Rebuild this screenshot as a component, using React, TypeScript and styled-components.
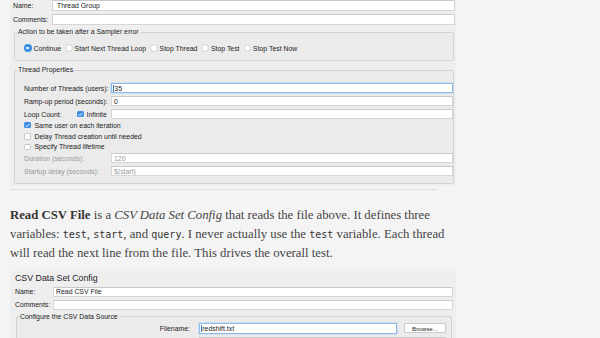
import React, {FC} from "react";
import styled, {createGlobalStyle} from "styled-components";

const GlobalStyle = createGlobalStyle`
  html, body {
    margin: 0;
    padding: 0;
    background: #f4f4f4;
    overflow: hidden;
  }
  #root {
    width: 600px;
    height: 338px;
    overflow: hidden;
  }
`;

const Page = styled.div`
  display: flex;
  flex-direction: column;
  padding-left: 10px;
  width: 446px;
`;

// screenshot of the JMeter panel
const Shot = styled.div<{$top?: number; $left: number; $right: number}>`
  display: flex;
  flex-direction: column;
  background: #eeeeee;
  font-family: "Liberation Sans", Arial, sans-serif;
  font-size: 6.9px;
  color: #222;
  padding: ${p => p.$top || 0}px ${p => p.$right}px 2px ${p => p.$left}px;
`;

const ShotTitle = styled.div`
  font-size: 8.8px;
  line-height: 12px;
  height: 12px;
  color: #1e1e1e;
`;

const FormRow = styled.div<{$label: number; $gap?: number; $h?: number}>`
  display: grid;
  grid-template-columns: ${p => p.$label}px 1fr;
  align-items: center;
  height: ${p => p.$h ?? 10}px;
  margin-top: ${p => p.$gap ?? 3}px;
`;

const Label = styled.span<{$disabled?: boolean; $right?: boolean}>`
  white-space: nowrap;
  color: ${p => (p.$disabled ? "#9a9a9a" : "#222")};
  text-align: ${p => (p.$right ? "right" : "left")};
  padding-right: ${p => (p.$right ? 2 : 0)}px;
`;

const Field = styled.div<{$focus?: boolean; $disabled?: boolean; $indent?: number}>`
  height: 100%;
  box-sizing: border-box;
  background: #fff;
  border: 1px solid ${p => (p.$focus ? "#8fbbe8" : "#d6d6d6")};
  border-top-color: ${p => (p.$focus ? "#8fbbe8" : "#c9c9c9")};
  box-shadow: ${p => (p.$focus ? "0 0 0 0.5px #b9d5f2" : "none")};
  color: ${p => (p.$disabled ? "#999" : "#1a1a1a")};
  padding-left: ${p => p.$indent ?? 2}px;
  display: flex;
  align-items: center;
  white-space: nowrap;
  overflow: hidden;
  position: relative;
`;

const Caret = styled.span`
  width: 0.8px;
  height: 7px;
  background: #3a7bd5;
  margin-right: 0.5px;
`;

const Group = styled.fieldset<{$mt: number; $mx: number}>`
  margin: ${p => p.$mt}px ${p => p.$mx}px 0 ${p => p.$mx}px;
  padding: 0;
  min-width: 0;
  border: 1px solid #d3d3d3;
  border-radius: 2px;
  background: #ebebeb;
`;

const Legend = styled.legend`
  margin-left: 2px;
  padding: 0 1px;
  line-height: 8px;
  font-size: 6.9px;
  color: #222;
`;

const GroupBody = styled.div<{$pt: number; $pb: number; $pl: number; $pr?: number}>`
  display: flex;
  flex-direction: column;
  padding: ${p => p.$pt}px ${p => p.$pr ?? 0}px ${p => p.$pb}px ${p => p.$pl}px;
`;

const RadioRow = styled.div`
  display: flex;
  align-items: center;
  height: 10px;
  gap: 4px;
`;

const RadioItem = styled.label`
  display: flex;
  align-items: center;
  gap: 2px;
  white-space: nowrap;
`;

const RadioDot = styled.span<{$on?: boolean}>`
  width: 7.5px;
  height: 7.5px;
  box-sizing: border-box;
  border-radius: 50%;
  background: ${p => (p.$on ? "#3d8ee6" : "#fdfdfd")};
  border: ${p => (p.$on ? "none" : "0.8px solid #cfcfcf")};
  display: flex;
  align-items: center;
  justify-content: center;
  &::after {
    content: "";
    width: 2.6px;
    height: 2.6px;
    border-radius: 50%;
    background: #fff;
    display: ${p => (p.$on ? "block" : "none")};
  }
`;

const CheckRow = styled.div<{$h?: number}>`
  display: flex;
  align-items: center;
  gap: 4px;
  height: ${p => p.$h ?? 10.5}px;
  white-space: nowrap;
`;

const Box = styled.span<{$on?: boolean}>`
  width: 6.5px;
  height: 6.5px;
  box-sizing: border-box;
  border-radius: 1.5px;
  background: ${p => (p.$on ? "#3d8ee6" : "#fff")};
  border: ${p => (p.$on ? "none" : "0.8px solid #c4c4c4")};
  display: flex;
  align-items: center;
  justify-content: center;
  flex: none;
`;

const LoopCell = styled.div`
  display: flex;
  align-items: center;
  gap: 3px;
  white-space: nowrap;
`;

const LoopLabel = styled.span`
  width: 50px;
`;

const Divider = styled.div`
  height: 1px;
  width: 427px;
  background: #dedede;
  margin-top: 3px;
`;

const Prose = styled.p`
  margin: 16px 0 8px 0;
  font-family: "Liberation Serif", "Times New Roman", serif;
  font-size: 12.75px;
  line-height: 18.6px;
  color: #454545;
  white-space: nowrap;
  b {
    color: #333;
  }
  code {
    font-family: "DejaVu Sans Mono", monospace;
    font-size: 10px;
    color: #333;
  }
`;

const FileRow = styled.div`
  display: grid;
  grid-template-columns: 1fr 198px 42px;
  column-gap: 7px;
  align-items: center;
  height: 11px;
`;

const BrowseButton = styled.button`
  height: 10px;
  padding: 0;
  font-family: "Liberation Sans", Arial, sans-serif;
  font-size: 6.2px;
  color: #222;
  background: #fff;
  border: 1px solid #c8c8c8;
  border-radius: 2px;
`;

const ComboRow = styled.div`
  display: grid;
  grid-template-columns: 1fr 247px;
  height: 11px;
  margin-top: 3px;
`;

const ComboArrow = styled.span`
  position: absolute;
  right: 0;
  top: 0;
  width: 7px;
  height: 100%;
  background: #3d8ee6;
  border-radius: 1.5px;
`;

const Tick: FC = () => (
  <svg width="5" height="5" viewBox="0 0 10 10">
    <path d="M2 5.2 L4.2 7.4 L8.2 2.6" fill="none" stroke="#fff" strokeWidth="1.8"
          strokeLinecap="round" strokeLinejoin="round"/>
  </svg>
);

const radios = ["Continue", "Start Next Thread Loop", "Stop Thread", "Stop Test", "Stop Test Now"];

const ThreadGroupShot: FC = () => (
  <Shot $left={3} $right={1}>
    <FormRow $label={39} $gap={0} $h={11}>
      <Label>Name:</Label>
      <Field $indent={4}>Thread Group</Field>
    </FormRow>
    <FormRow $label={39} $gap={3} $h={11}>
      <Label>Comments:</Label>
      <Field/>
    </FormRow>
    <Group $mt={3} $mx={1}>
      <Legend>Action to be taken after a Sampler error</Legend>
      <GroupBody $pt={7} $pb={7} $pl={9}>
        <RadioRow>
          {radios.map((r, i) => (
            <RadioItem key={r}>
              <RadioDot $on={i === 0}/>
              {r}
            </RadioItem>
          ))}
        </RadioRow>
      </GroupBody>
    </Group>
    <Group $mt={5} $mx={1}>
      <Legend>Thread Properties</Legend>
      <GroupBody $pt={9} $pb={7} $pl={9}>
        <FormRow $label={87} $gap={0}>
          <Label>Number of Threads (users):</Label>
          <Field $focus $indent={1}><Caret/>35</Field>
        </FormRow>
        <FormRow $label={87}>
          <Label>Ramp-up period (seconds):</Label>
          <Field>0</Field>
        </FormRow>
        <FormRow $label={87}>
          <LoopCell>
            <LoopLabel>Loop Count:</LoopLabel>
            <Box $on><Tick/></Box>
            Infinite
          </LoopCell>
          <Field/>
        </FormRow>
        <CheckRow $h={12}>
          <Box $on><Tick/></Box>
          Same user on each iteration
        </CheckRow>
        <CheckRow>
          <Box/>
          Delay Thread creation until needed
        </CheckRow>
        <CheckRow>
          <Box/>
          Specify Thread lifetime
        </CheckRow>
        <FormRow $label={87} $gap={1}>
          <Label $disabled>Duration (seconds):</Label>
          <Field $disabled>120</Field>
        </FormRow>
        <FormRow $label={87}>
          <Label $disabled>Startup delay (seconds):</Label>
          <Field $disabled>{"${start}"}</Field>
        </FormRow>
      </GroupBody>
    </Group>
  </Shot>
);

const CsvConfigShot: FC = () => (
  <Shot $top={1} $left={5} $right={3}>
    <ShotTitle>CSV Data Set Config</ShotTitle>
    <FormRow $label={38} $gap={3}>
      <Label>Name:</Label>
      <Field>Read CSV File</Field>
    </FormRow>
    <FormRow $label={38} $gap={3}>
      <Label>Comments:</Label>
      <Field/>
    </FormRow>
    <Group $mt={3} $mx={1}>
      <Legend>Configure the CSV Data Source</Legend>
      <GroupBody $pt={2} $pb={4} $pl={4} $pr={5}>
        <FileRow>
          <Label $right>Filename:</Label>
          <Field $focus $indent={1}><Caret/>redshift.txt</Field>
          <BrowseButton>Browse...</BrowseButton>
        </FileRow>
        <ComboRow>
          <span/>
          <Field><ComboArrow/></Field>
        </ComboRow>
      </GroupBody>
    </Group>
  </Shot>
);

const App: FC = () => (
  <>
    <GlobalStyle/>
    <Page>
      <ThreadGroupShot/>
      <Divider/>
      <Prose>
        <b>Read CSV File</b> is a <i>CSV Data Set Config</i> that reads the file above. It defines three
        <br/>
        variables: <code>test</code>, <code>start</code>, and <code>query</code>. I never actually use
        the <code>test</code> variable. Each thread
        <br/>
        will read the next line from the file. This drives the overall test.
      </Prose>
      <CsvConfigShot/>
    </Page>
  </>
);

export default App;
